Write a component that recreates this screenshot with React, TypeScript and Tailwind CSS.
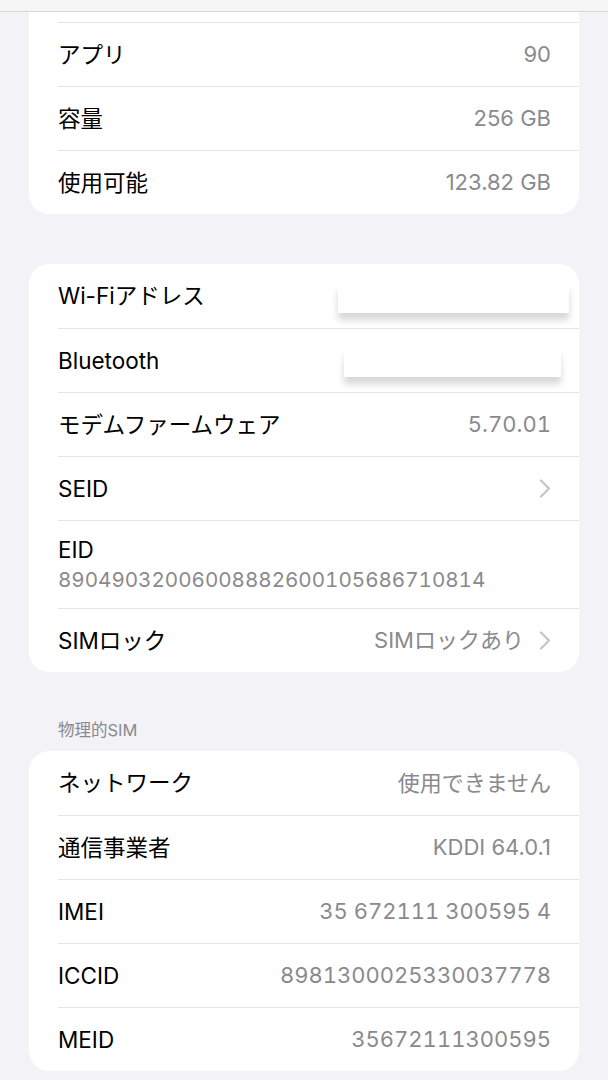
import React from "react";

type Row = {
  label: string;
  value?: string;
  chevron?: boolean;
  mono?: boolean;
  redact?: "wifi" | "bt";
  stacked?: boolean;
};

const storage: Row[] = [
  { label: "アプリ", value: "90" },
  { label: "容量", value: "256 GB" },
  { label: "使用可能", value: "123.82 GB" },
];

const network: Row[] = [
  { label: "Wi-Fiアドレス", redact: "wifi" },
  { label: "Bluetooth", redact: "bt" },
  { label: "モデムファームウェア", value: "5.70.01", mono: true },
  { label: "SEID", chevron: true },
  { label: "EID", value: "89049032006008882600105686710814", stacked: true },
  { label: "SIMロック", value: "SIMロックあり", chevron: true },
];

const physical: Row[] = [
  { label: "ネットワーク", value: "使用できません" },
  { label: "通信事業者", value: "KDDI 64.0.1" },
  { label: "IMEI", value: "35 672111 300595 4", mono: true },
  { label: "ICCID", value: "8981300025330037778", mono: true },
  { label: "MEID", value: "35672111300595", mono: true },
];

function Chevron() {
  return (
    <svg width="12" height="19" viewBox="0 0 12 19" className="ml-[15px] shrink-0">
      <path d="M2 1.5 L10 9.5 L2 17.5" fill="none" stroke="#c4c4c7" strokeWidth="2.2" strokeLinecap="round" strokeLinejoin="round" />
    </svg>
  );
}

function ListRow({ row, first }: { row: Row; first: boolean }) {
  const line = first ? "" : "border-t border-[#e4e4e7]";

  if (row.stacked) {
    return (
      <div className={`ml-[29px] pr-[28px] h-[88px] flex flex-col justify-center ${line}`}>
        <span className="text-[22.5px] leading-[30px] text-black">{row.label}</span>
        <span className="text-[20.6px] leading-[30px] text-[#8a8a8e] tabular-nums">{row.value}</span>
      </div>
    );
  }

  return (
    <div className={`ml-[29px] pr-[28px] h-[64px] flex items-center justify-between ${line}`}>
      <span className="text-[22.5px] text-black">{row.label}</span>
      <div className="flex items-center">
        {row.redact === "wifi" && (
          <div className="w-[231px] h-[29px] mt-[4px] -mr-[18px] bg-white shadow-[0_7px_7px_rgba(0,0,0,0.16)]" />
        )}
        {row.redact === "bt" && (
          <div className="w-[217px] h-[27px] mt-[6px] -mr-[10px] bg-white shadow-[0_7px_7px_rgba(0,0,0,0.16)]" />
        )}
        {row.value && (
          <span className={`text-[22px] text-[#8a8a8e] ${row.mono ? "tabular-nums" : ""}`}>{row.value}</span>
        )}
        {row.chevron && <Chevron />}
      </div>
    </div>
  );
}

function Card({ rows, className = "" }: { rows: Row[]; className?: string }) {
  return (
    <div className={`mx-[29px] bg-white rounded-[20px] overflow-hidden ${className}`}>
      {rows.map((r, i) => (
        <ListRow key={r.label} row={r} first={i === 0} />
      ))}
    </div>
  );
}

export default function App() {
  return (
    <div
      className="min-h-screen bg-[#f2f2f7] pb-[20px]"
      style={{ fontFamily: '"Inter", "Noto Sans CJK JP", sans-serif' }}
    >
      <div className="h-[12px] bg-[#f6f6f7] border-b border-[#d6d6da]" />

      {/* storage card, scrolled so its top is hidden */}
      <div className="mx-[29px] bg-white rounded-b-[20px] pt-[10px]">
        {storage.map((r) => (
          <ListRow key={r.label} row={r} first={false} />
        ))}
      </div>

      <Card rows={network} className="mt-[50px]" />

      <p className="mt-[47px] ml-[58px] text-[16.5px] leading-[22px] text-[#8a8a8e]">物理的SIM</p>

      <Card rows={physical} className="mt-[10px]" />
    </div>
  );
}
